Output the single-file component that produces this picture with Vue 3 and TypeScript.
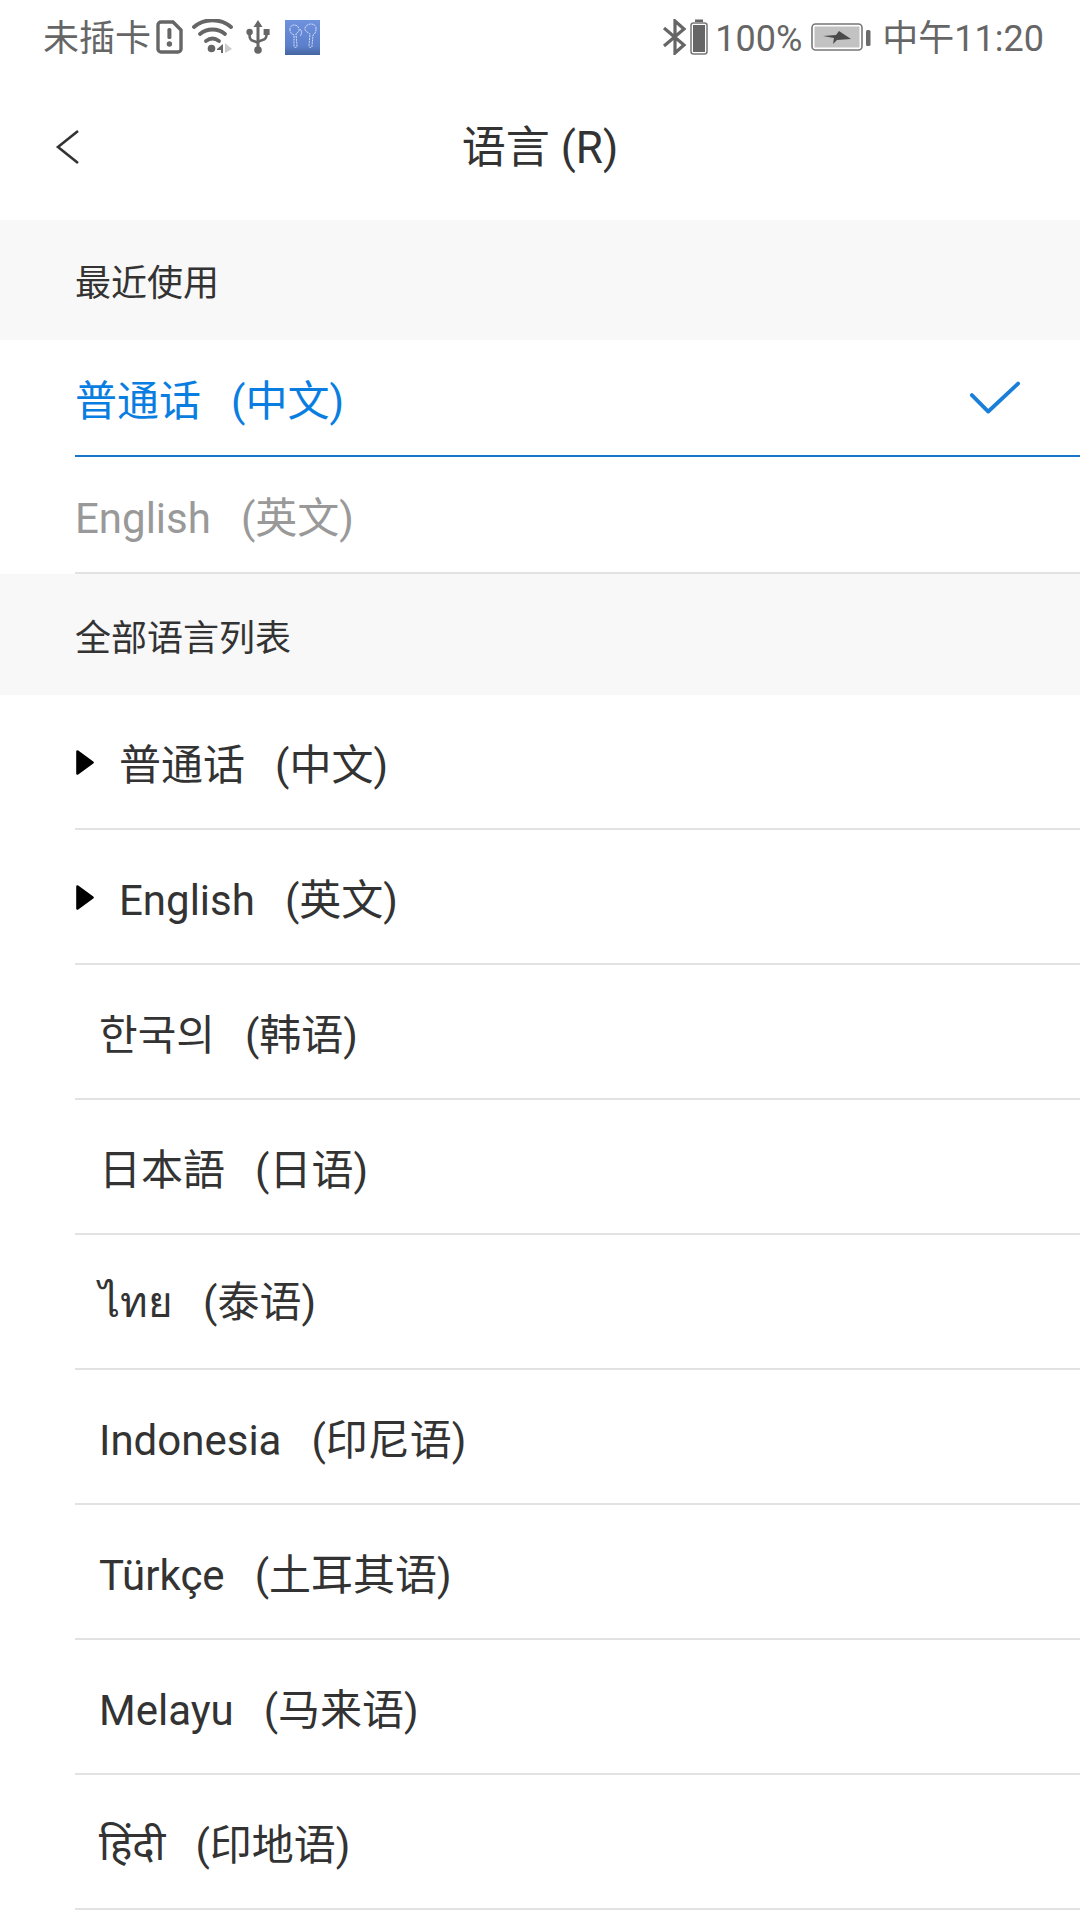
<script setup lang="ts">
interface Lang { name: string; zh: string; mark?: boolean }
const langs: Lang[] = [
  { name: '普通话', zh: '(中文)', mark: true },
  { name: 'English', zh: '(英文)', mark: true },
  { name: '한국의', zh: '(韩语)' },
  { name: '日本語', zh: '(日语)' },
  { name: 'ไทย', zh: '(泰语)' },
  { name: 'Indonesia', zh: '(印尼语)' },
  { name: 'Türkçe', zh: '(土耳其语)' },
  { name: 'Melayu', zh: '(马来语)' },
  { name: 'हिंदी', zh: '(印地语)' },
]
</script>

<template>
  <div class="page">
    <div class="status">
      <div class="status-left">
        <span class="st-text">未插卡</span>
        <svg class="ic-sim" width="27" height="34" viewBox="0 0 27 34">
          <path d="M5 2h12l8 8v19a3 3 0 0 1-3 3H5a3 3 0 0 1-3-3V5a3 3 0 0 1 3-3z" fill="none" stroke="#666" stroke-width="3.4" />
          <rect x="11.4" y="8" width="4" height="11" rx="1.6" fill="#666" />
          <circle cx="13.4" cy="24" r="2.7" fill="#666" />
        </svg>
        <svg class="ic-wifi" width="42" height="36" viewBox="0 0 42 36">
          <path d="M2 8C12 -1 29 -1 39 8" fill="none" stroke="#666" stroke-width="3.8" stroke-linecap="round" />
          <path d="M8 15C15 9 26 9 33 15" fill="none" stroke="#666" stroke-width="3.8" stroke-linecap="round" />
          <path d="M14 22C18 19 23 19 27 22" fill="none" stroke="#666" stroke-width="3.8" stroke-linecap="round" />
          <circle cx="19.5" cy="29.5" r="3.8" fill="#666" />
          <path d="M25 30l6-5v9h-2v-3h-4z" fill="#666" />
          <path d="M33 24l7 6-7 4z" fill="#ccc" />
        </svg>
        <svg class="ic-usb" width="24" height="36" viewBox="0 0 24 36">
          <path d="M12 1l4.5 7h-3v21h-3V8h-3z" fill="#666" />
          <circle cx="12" cy="31" r="3.8" fill="#666" />
          <circle cx="3.6" cy="13" r="3.2" fill="#666" />
          <rect x="17.6" y="10" width="6" height="6" fill="#666" />
          <path d="M3.6 14v3q0 4 4 5l4 1.5M20.5 14v2q0 4-4 5l-4 1.5" fill="none" stroke="#666" stroke-width="2.6" />
        </svg>
        <svg class="ic-pods" width="35" height="35" viewBox="0 0 35 35">
          <defs>
            <linearGradient id="podsBg" x1="0" y1="0" x2="0" y2="1">
              <stop offset="0" stop-color="#6f92de" />
              <stop offset="0.75" stop-color="#5c7fcb" />
              <stop offset="1" stop-color="#45659f" />
            </linearGradient>
          </defs>
          <rect width="35" height="35" fill="url(#podsBg)" />
          <path d="M5 10c-1-6 8-7 9-1 1 3-2 3-3 5l1 12c0 2-3 2-3 0l0-11c-2-1-4-2-4-5z" fill="none" stroke="#dfe8fb" stroke-width="0.9" stroke-dasharray="2 0.8" />
          <path d="M31 9c1-6-9-7-11-1-1 3 4 5 5 6l-1 12c0 2 3 2 3 0l1-11c2-1 3-3 3-6z" fill="none" stroke="#dfe8fb" stroke-width="0.9" stroke-dasharray="2 0.8" />
          <path d="M15 9c2 2 2 5 0 7" fill="none" stroke="#dfe8fb" stroke-width="0.8" />
        </svg>
      </div>
      <div class="status-right">
        <svg class="ic-bt" width="26" height="36" viewBox="0 0 26 36">
          <path d="M2 9l20 17-9 8V2l9 8L2 27" fill="none" stroke="#666" stroke-width="3.2" />
        </svg>
        <svg class="ic-batt" width="18" height="36" viewBox="0 0 18 36">
          <rect x="5" y="0.5" width="8" height="2.5" fill="#666" />
          <rect x="1" y="4" width="16" height="31" rx="2.5" fill="none" stroke="#777" stroke-width="1.5" />
          <rect x="3" y="6" width="12" height="27" fill="#666" />
        </svg>
        <span class="st-text pct">100%</span>
        <svg class="ic-charge" width="60" height="29" viewBox="0 0 60 29">
          <rect x="1" y="1" width="50" height="26" rx="3.5" fill="none" stroke="#777" stroke-width="1.6" />
          <rect x="3.5" y="3.5" width="45" height="21" fill="#c2c2c2" />
          <path d="M12 13l13-1 3-4 12 8-14 1-4 4 1-6z" fill="#4a4a4a" />
          <rect x="55" y="7" width="4.5" height="16" rx="1.6" fill="#6a6a6a" />
        </svg>
        <span class="st-text time">中午11:20</span>
      </div>
    </div>

    <header class="nav">
      <svg class="back" width="26" height="38" viewBox="0 0 26 38">
        <path d="M24 3L4 19l20 16" fill="none" stroke="#333" stroke-width="2.6" />
      </svg>
      <span class="title">语言 (R)</span>
    </header>

    <div class="section">最近使用</div>
    <div class="row row-recent active">
      <span class="txt">普通话<span class="zh">(中文)</span></span>
      <svg class="check" width="52" height="38" viewBox="0 0 54 38">
        <path d="M3 15l17 17L51 3" fill="none" stroke="#1a7fd8" stroke-width="4" stroke-linecap="round" stroke-linejoin="round" />
      </svg>
    </div>
    <div class="row row-recent muted">
      <span class="txt">English<span class="zh">(英文)</span></span>
    </div>

    <div class="section section-all">全部语言列表</div>
    <div v-for="l in langs" :key="l.name" class="row row-lang">
      <svg v-if="l.mark" class="tri" width="20" height="27" viewBox="0 0 20 27">
        <path d="M2.5 2.5l15 11-15 11z" fill="#000" stroke="#000" stroke-width="2.6" stroke-linejoin="round" />
      </svg>
      <span class="txt">{{ l.name }}<span class="zh">{{ l.zh }}</span></span>
    </div>
  </div>
</template>

<style scoped>
.page {
  width: 1080px;
  height: 1920px;
  overflow: hidden;
  background: #fff;
  font-family: Roboto, "Noto Sans CJK SC", "Noto Sans", sans-serif;
  color: #333;
}
.status {
  height: 74px;
  display: flex;
  justify-content: space-between;
  align-items: center;
  padding: 0 36px 0 43px;
}
.status-left,
.status-right {
  display: flex;
  align-items: center;
}
.st-text {
  font-size: 36px;
  line-height: 40px;
  color: #666;
  position: relative;
  top: 2px;
}
.ic-sim { margin-left: 5px; }
.ic-wifi { margin-left: 9px; }
.ic-usb { margin-left: 12px; }
.ic-pods { margin-left: 15px; }
.ic-batt { margin-left: 2px; }
.pct { margin-left: 7px; }
.ic-charge { margin-left: 9px; }
.time { margin-left: 11px; }
.nav {
  height: 146px;
  display: flex;
  align-items: center;
  justify-content: center;
  padding-bottom: 7px;
  box-sizing: border-box;
  position: relative;
}
.back {
  position: absolute;
  left: 54px;
  top: 54px;
}
.title {
  font-size: 44px;
  color: #333;
}
.section {
  height: 120px;
  display: flex;
  align-items: center;
  padding-left: 75px;
  background: #f8f8f8;
  font-size: 36px;
  color: #333;
  box-sizing: border-box;
}
.section-all { height: 121px; }
.row {
  margin-left: 75px;
  display: flex;
  align-items: center;
  box-sizing: border-box;
  border-bottom: 2px solid #e2e2e2;
  font-size: 42px;
}
.row-recent {
  height: 117px;
  justify-content: space-between;
  padding-right: 59px;
}
.row-lang {
  height: 135px;
  padding-left: 24px;
}
.zh { margin-left: 30px; }
.active {
  color: #0a7ee0;
  border-bottom-color: #1a76c8;
}
.muted { color: #999; }
.check {
  position: relative;
  top: 1px;
}
.tri {
  margin-left: -24px;
  margin-right: 24px;
  position: relative;
  top: 1px;
}
</style>

<style>
html, body { margin: 0; background: #fff; }
</style>
